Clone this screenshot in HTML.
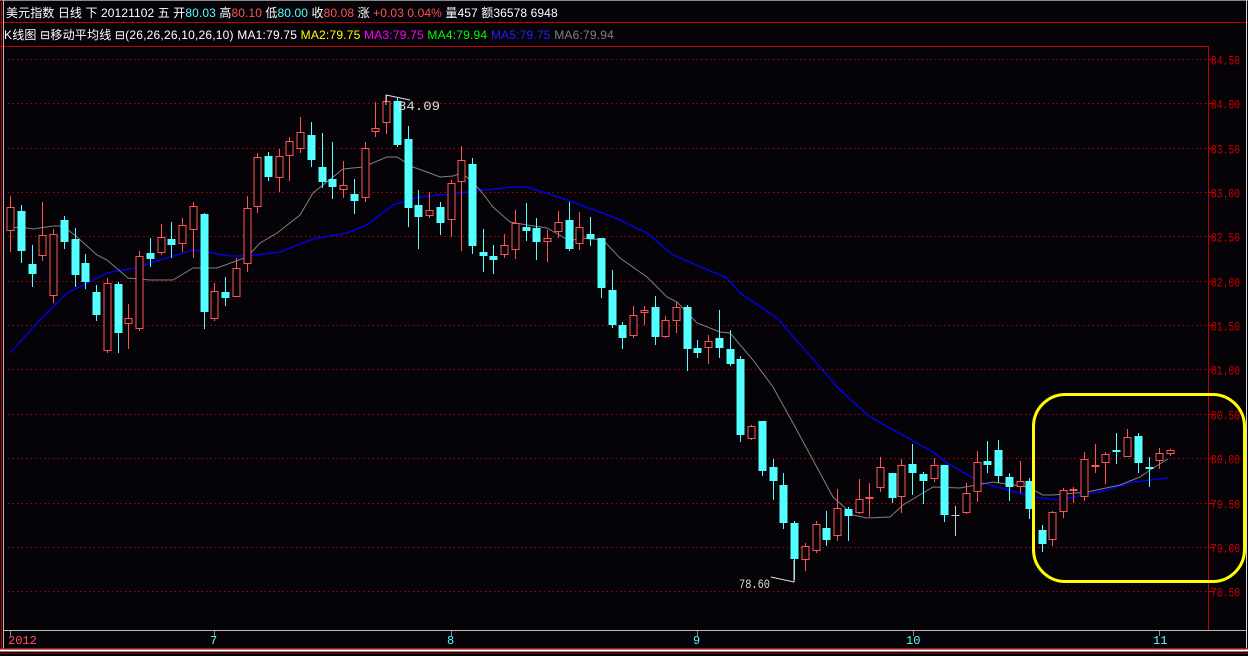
<!DOCTYPE html>
<html><head><meta charset="utf-8"><style>
html,body{margin:0;padding:0;background:#050307;width:1248px;height:656px;overflow:hidden}
svg{display:block}
text{font-family:"Liberation Mono","Noto Sans CJK SC",monospace}
.h{font-family:"Liberation Sans","Noto Sans CJK SC",sans-serif;font-size:12px}
</style></head><body>
<svg id="s" width="1248" height="656" xmlns="http://www.w3.org/2000/svg">
<rect width="1248" height="656" fill="#050307"/>
<line x1="0" y1="0.5" x2="1248" y2="0.5" stroke="#888"/>
<line x1="0" y1="22.5" x2="1248" y2="22.5" stroke="#c00000"/>
<line x1="0" y1="46.5" x2="1208" y2="46.5" stroke="#c00000"/>
<line x1="1.5" y1="0" x2="1.5" y2="650" stroke="#c00000"/>
<line x1="3.5" y1="0" x2="3.5" y2="650" stroke="#bbb"/>
<line x1="1246.5" y1="0" x2="1246.5" y2="650" stroke="#ddd"/>
<line x1="1208.5" y1="46" x2="1208.5" y2="630" stroke="#c00000"/>
<text class="h" x="6" y="17" fill="#fff" letter-spacing="0.1">美元指数 日线 下 20121102 五 开<tspan fill="#54ffff">80.03</tspan> 高<tspan fill="#ff5454">80.10</tspan> 低<tspan fill="#54ffff">80.00</tspan> 收<tspan fill="#ff5454">80.08</tspan> 涨 <tspan fill="#ff5454">+0.03 0.04%</tspan> 量457 额36578 6948</text>
<text class="h" x="4" y="39" fill="#fff" letter-spacing="0.2">K线图 ⊟移动平均线 ⊟(26,26,26,10,26,10) MA1:79.75 <tspan fill="#ffff00">MA2:79.75</tspan> <tspan fill="#ff00ff">MA3:79.75</tspan> <tspan fill="#00ff00">MA4:79.94</tspan> <tspan fill="#2020ff">MA5:79.75</tspan> <tspan fill="#808080">MA6:79.94</tspan></text>
<g id="grid"></g>
<polyline fill="none" stroke="#0000ff" stroke-width="1.3" points="10,353 40,320 67,293 107,273 140,267 160,260 193,250 230,256 247,256 280,252 313,239 347,233 367,225 393,205 420,197 467,192 513,187 527,187 567,200 613,217 647,233 673,255 727,278 740,293 777,318 820,367 840,390 870,417 933,452 947,463 980,482 1033,497 1060,500 1107,490 1133,482 1168,478"/>
<polyline fill="none" stroke="#808080" stroke-width="1" points="10,228 20,227 33,229 53,226 63,226 77,237 97,255 107,260 128,278 150,280 173,280 193,268 217,268 247,257 260,243 277,233 300,215 313,193 343,169 363,167 387,157 397,157 413,167 427,172 440,177 453,176 462,173 470,180 480,190 493,207 510,222 527,225 547,228 570,241 580,238 603,240 620,258 647,277 667,297 677,302 697,323 720,332 730,333 753,360 773,387 793,423 820,473 833,497 853,515 867,518 890,517 903,505 933,487 960,488 993,482 1027,487 1043,495 1053,495 1087,492 1120,485 1140,477 1153,468 1168,459"/>
<g id="c"></g>
<polyline fill="none" stroke="#ddd" points="386,105 386,95 410,100"/>
<text x="398" y="110" fill="#ddd" font-size="13" textLength="42" lengthAdjust="spacingAndGlyphs">84.09</text>
<polyline fill="none" stroke="#ddd" points="771,577 794,582 794,560"/>
<text x="739" y="588" fill="#ddd" font-size="13" textLength="31" lengthAdjust="spacingAndGlyphs">78.60</text>
<rect x="1033.5" y="394.5" width="211" height="187" rx="32" fill="none" stroke="#ffff00" stroke-width="3"/>
<line x1="4" y1="630.5" x2="1246" y2="630.5" stroke="#bbb"/>
<line x1="0" y1="648.5" x2="1248" y2="648.5" stroke="#e00000"/>
<line x1="0" y1="650.5" x2="1248" y2="650.5" stroke="#fff" stroke-width="2"/>
<line x1="0" y1="653.5" x2="1248" y2="653.5" stroke="#800000"/>
<g font-size="12">
<text x="8" y="644" fill="#ff5454">2012</text>
<text x="210" y="644" fill="#54ffff">7</text>
<text x="447" y="644" fill="#54ffff">8</text>
<text x="693" y="644" fill="#54ffff">9</text>
<text x="906" y="644" fill="#54ffff">10</text>
<text x="1153" y="644" fill="#54ffff">11</text>
</g>
<g stroke="#888"><line x1="10.5" y1="631" x2="10.5" y2="636"/><line x1="214.5" y1="631" x2="214.5" y2="636"/><line x1="451.5" y1="631" x2="451.5" y2="636"/><line x1="697.5" y1="631" x2="697.5" y2="636"/><line x1="913.5" y1="631" x2="913.5" y2="636"/><line x1="1159.5" y1="631" x2="1159.5" y2="636"/></g>
</svg>
<script>
var NS="http://www.w3.org/2000/svg",g=document.getElementById('grid'),c=document.getElementById('c');
function el(p,t,a){var e=document.createElementNS(NS,t);for(var k in a)e.setAttribute(k,a[k]);p.appendChild(e);return e}
var labs=["84.50","84.00","83.50","83.00","82.50","82.00","81.50","81.00","80.50","80.00","79.50","79.00","78.50"];
for(var i=0;i<13;i++){var y=Math.round(59+i*44.35)+0.5;
el(g,'line',{x1:8,y1:y,x2:1208,y2:y,stroke:'#b00000','stroke-dasharray':'1.5 3'});
el(g,'line',{x1:1208,y1:y,x2:1214,y2:y,stroke:'#c00000'});
var t=el(g,'text',{x:1211,y:y+5,fill:'#d00000','font-size':'13',textLength:'29',lengthAdjust:'spacingAndGlyphs'});t.textContent=labs[i];}
var d=[[10,'r',207,231,196,252],[21,'c',211,251,205,263],[32,'c',264,274,245,287],[42,'r',235,256,202,261],[53,'r',234,296,229,303],[64,'c',220,242,216,249],[75,'c',239,275,228,287],[85,'c',263,282,254,289],[96,'c',292,315,285,321],[107,'r',283,351,278,353],[118,'c',284,333,282,353],[128,'r',318,324,304,349],[139,'r',256,329,251,331],[150,'c',253,259,238,267],[161,'r',237,253,224,255],[171,'c',239,245,222,258],[182,'r',225,244,218,252],[193,'r',206,230,202,258],[204,'c',214,312,213,329],[214,'r',291,319,283,321],[225,'c',292,298,277,306],[236,'r',268,297,258,297],[247,'r',208,264,196,272],[257,'r',157,207,153,213],[268,'c',156,177,152,181],[279,'r',156,178,149,192],[289,'r',141,156,137,181],[300,'r',132,149,117,153],[311,'c',135,160,122,167],[322,'c',167,182,133,188],[332,'c',179,187,142,199],[343,'r',185,190,161,198],[354,'c',194,201,179,214],[365,'r',148,198,142,202],[375,'r',128,132,102,137],[386,'r',101,123,95,134],[397,'c',101,145,98,147],[408,'c',139,208,126,227],[418,'c',205,217,190,249],[429,'r',210,216,192,218],[440,'c',207,223,202,235],[451,'r',183,220,180,237],[461,'r',160,182,146,251],[472,'c',164,246,158,254],[483,'c',252,256,229,272],[493,'c',256,260,245,274],[504,'r',245,255,234,258],[515,'r',223,250,210,259],[526,'c',227,231,203,241],[536,'c',228,242,218,260],[547,'r',238,242,230,262],[558,'r',222,232,211,238],[569,'c',220,249,202,251],[579,'r',227,244,212,250],[590,'c',234,239,217,246],[601,'c',238,288,238,298],[612,'c',290,325,270,328],[622,'c',325,338,322,349],[633,'r',315,336,306,338],[644,'r',310,313,306,325],[655,'c',307,337,296,345],[665,'r',320,337,316,338],[676,'r',307,321,302,333],[687,'c',307,349,305,371],[697,'c',348,353,340,358],[708,'r',341,348,335,364],[719,'c',338,348,310,358],[730,'c',349,364,330,366],[740,'c',359,435,356,442],[751,'r',426,439,425,440],[762,'c',421,471,421,476],[773,'c',467,481,459,500],[783,'c',485,523,473,529],[794,'c',523,559,521,580],[805,'r',546,560,543,571],[816,'r',524,551,521,553],[826,'c',528,540,511,546],[837,'r',508,536,489,541],[848,'c',509,516,507,541],[859,'r',499,513,479,514],[869,'r',497,499,483,517],[880,'r',467,488,457,492],[892,'c',473,498,473,503],[901,'r',465,497,459,513],[912,'c',464,473,444,495],[923,'c',474,481,472,504],[934,'r',465,479,458,482],[944,'c',465,515,465,522],[955,'g',515,515,506,536],[966,'r',493,513,483,514],[977,'r',462,492,451,502],[987,'c',461,465,441,473],[998,'c',450,476,440,483],[1009,'c',477,487,473,501],[1020,'r',481,487,461,493],[1029,'c',481,509,478,519],[1042,'c',530,544,525,552],[1052,'r',512,540,511,546],[1063,'r',490,512,488,518],[1073,'r',489,490,487,503],[1084,'r',459,497,452,501],[1095,'r',465,466,444,473],[1105,'r',454,463,452,484],[1116,'c',450,451,433,464],[1127,'r',437,457,429,457],[1138,'c',436,463,433,473],[1149,'c',467,467,457,487],[1159,'r',453,461,448,469],[1170,'r',450,454,449,456]];
d.forEach(function(k){var x=k[0],col=k[1]=='r'?'#ff5454':k[1]=='c'?'#54ffff':'#cccccc';
el(c,'line',{x1:x+.5,y1:k[4],x2:x+.5,y2:k[5],stroke:col});
var h=Math.max(k[3]-k[2],1);
if(k[1]=='r')el(c,'rect',{x:x-3,y:k[2]+.5,width:7,height:Math.max(h-1,1),fill:'#050307',stroke:col});
else if(k[1]=='c')el(c,'rect',{x:x-3.5,y:k[2],width:8,height:Math.max(h,2),fill:col});
else el(c,'line',{x1:x-3.5,y1:k[2]+.5,x2:x+4.5,y2:k[2]+.5,stroke:col});});
</script>
</body></html>
